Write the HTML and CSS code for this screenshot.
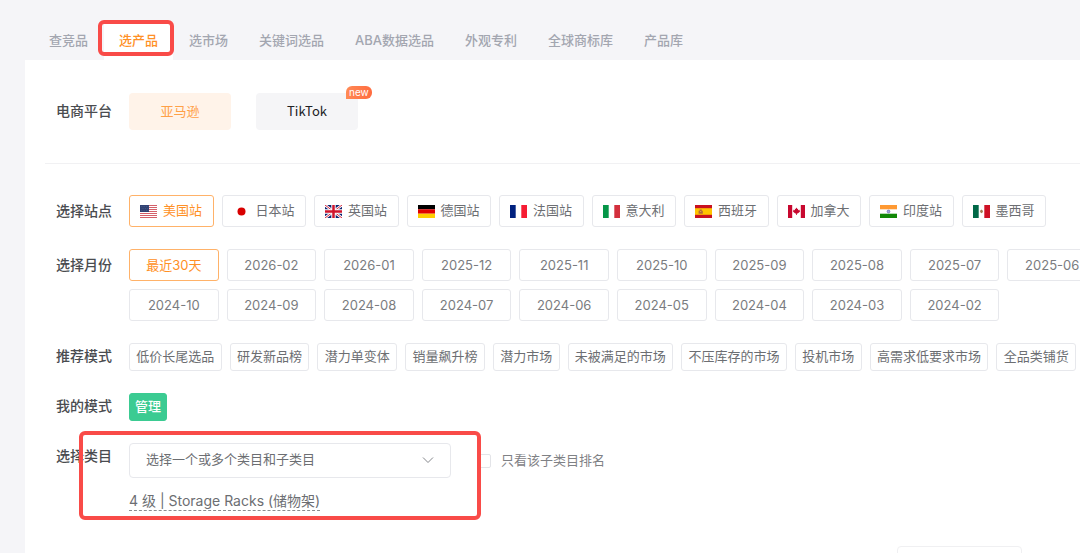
FILE: index.html
```
<!DOCTYPE html>
<html lang="zh-CN">
<head>
<meta charset="utf-8">
<title>选产品</title>
<link rel="stylesheet" href="styles.css">
</head>
<body>
<nav class="tabs">
  <a class="tab" href="#">查竞品</a>
  <a class="tab tab-active" href="#" aria-current="page">选产品<span class="marker marker-tab"></span></a>
  <a class="tab" href="#">选市场</a>
  <a class="tab" href="#">关键词选品</a>
  <a class="tab" href="#">ABA数据选品</a>
  <a class="tab" href="#">外观专利</a>
  <a class="tab" href="#">全球商标库</a>
  <a class="tab" href="#">产品库</a>
</nav>
<main class="panel">
  <section class="row platform-row">
    <h2 class="label label-platform" id="l-platform">电商平台</h2>
    <div class="platforms" role="group" aria-labelledby="l-platform">
      <button class="platform platform-active" type="button">亚马逊</button>
      <button class="platform" type="button">TikTok<span class="badge">new</span></button>
    </div>
  </section>
  <form class="filters">
    <section class="row">
      <h2 class="label" id="l-site">选择站点</h2>
      <div class="sites" role="group" aria-labelledby="l-site">
        <button class="option site option-active" type="button">
          <svg class="flag" viewBox="0 0 17 13"><path fill="#fff" d="M0 0h17v13H0z"/><path stroke="#d4606a" d="M0 .5h17M0 2.5h17M0 4.5h17M0 6.5h17M0 8.5h17M0 10.5h17M0 12.5h17"/><path fill="#2f4172" d="M0 0h9v7H0z"/><path stroke="#65739b" stroke-width=".5" stroke-dasharray=".7 1" d="M1 1.500h7.500M1.800 3.500h6.500M1 5.500h7.500"/></svg><span>美国站</span></button>
        <button class="option site" type="button">
          <svg class="flag" viewBox="0 0 17 13"><path fill="#fff" d="M0 0h17v13H0z"/><circle cx="8.500" cy="6.500" r="4" fill="#d80000"/></svg><span>日本站</span></button>
        <button class="option site" type="button">
          <svg class="flag" viewBox="0 0 17 13"><path fill="#0b2472" d="M0 0h17v13H0z"/><path stroke="#fff" stroke-width="2.600" d="M0 0l17 13M17 0L0 13"/><path stroke="#d0142c" stroke-width=".9" d="M0 0l17 13M17 0L0 13"/><path stroke="#fff" stroke-width="4.400" d="M8.500 0v13M0 6.500h17"/><path stroke="#d0142c" stroke-width="2.500" d="M8.500 0v13M0 6.500h17"/></svg><span>英国站</span></button>
        <button class="option site" type="button">
          <svg class="flag" viewBox="0 0 17 13"><path d="M0 0h17v4.300H0z"/><path fill="#e00000" d="M0 4.300h17v4.400H0z"/><path fill="#ffce00" d="M0 8.700h17V13H0z"/></svg><span>德国站</span></button>
        <button class="option site" type="button">
          <svg class="flag" viewBox="0 0 17 13"><path fill="#fff" d="M0 0h17v13H0z"/><path fill="#00217f" d="M0 0h5.700v13H0z"/><path fill="#f61c33" d="M11.300 0H17v13h-5.700z"/></svg><span>法国站</span></button>
        <button class="option site" type="button">
          <svg class="flag" viewBox="0 0 17 13"><path fill="#fff" d="M0 0h17v13H0z"/><path fill="#059648" d="M0 0h5.700v13H0z"/><path fill="#d32f3d" d="M11.300 0H17v13h-5.700z"/></svg><span>意大利</span></button>
        <button class="option site" type="button">
          <svg class="flag" viewBox="0 0 17 13"><path fill="#c91120" d="M0 0h17v13H0z"/><path fill="#ffc400" d="M0 3.200h17v6.600H0z"/><path fill="#b5683a" d="M4.600 4.500h2.200v1.200h1v3H3.600v-3h1z"/><path fill="#e6b44d" d="M5.200 6h1v1h-1z"/></svg><span>西班牙</span></button>
        <button class="option site" type="button">
          <svg class="flag" viewBox="0 0 17 13"><path fill="#fff" d="M0 0h17v13H0z"/><path fill="#c8082f" d="M0 0h4.200v13H0zM12.800 0H17v13h-4.200zM8.500 2.600l.9 1.400.8-.3-.2 1.500 1.900-.4-.4 1.300.7.500-2.500 2H8.900V10h-.8V8.600H7.300L4.800 6.600l.7-.5-.4-1.300 1.900.4-.2-1.500.8.3z"/></svg><span>加拿大</span></button>
        <button class="option site" type="button">
          <svg class="flag" viewBox="0 0 17 13"><path fill="#fff" d="M0 0h17v13H0z"/><path fill="#ff9932" d="M0 0h17v4.300H0z"/><path fill="#128807" d="M0 8.700h17V13H0z"/><circle cx="8.500" cy="6.500" r="1.400" fill="#a9a9dc" stroke="#5656ad" stroke-width=".6"/></svg><span>印度站</span></button>
        <button class="option site" type="button">
          <svg class="flag" viewBox="0 0 17 13"><path fill="#fff" d="M0 0h17v13H0z"/><path fill="#006847" d="M0 0h5.700v13H0z"/><path fill="#ce1126" d="M11.300 0H17v13h-5.700z"/><path fill="#a17b4e" d="M8.500 4.500l1.600 1.600-.6 1.500-1 .6-1-.6-.6-1.500z"/></svg><span>墨西哥</span></button>
      </div>
    </section>
    <section class="row">
      <h2 class="label" id="l-month">选择月份</h2>
      <div class="months" role="group" aria-labelledby="l-month">
        <button class="option option-active" type="button">最近30天</button>
        <button class="option" type="button">2026-02</button>
        <button class="option" type="button">2026-01</button>
        <button class="option" type="button">2025-12</button>
        <button class="option" type="button">2025-11</button>
        <button class="option" type="button">2025-10</button>
        <button class="option" type="button">2025-09</button>
        <button class="option" type="button">2025-08</button>
        <button class="option" type="button">2025-07</button>
        <button class="option" type="button">2025-06</button>
        <button class="option" type="button">2024-10</button>
        <button class="option" type="button">2024-09</button>
        <button class="option" type="button">2024-08</button>
        <button class="option" type="button">2024-07</button>
        <button class="option" type="button">2024-06</button>
        <button class="option" type="button">2024-05</button>
        <button class="option" type="button">2024-04</button>
        <button class="option" type="button">2024-03</button>
        <button class="option" type="button">2024-02</button>
      </div>
    </section>
    <section class="row">
      <h2 class="label label-short" id="l-mode">推荐模式</h2>
      <div class="modes" role="group" aria-labelledby="l-mode">
        <button class="chip" type="button">低价长尾选品</button>
        <button class="chip" type="button">研发新品榜</button>
        <button class="chip" type="button">潜力单变体</button>
        <button class="chip" type="button">销量飙升榜</button>
        <button class="chip" type="button">潜力市场</button>
        <button class="chip" type="button">未被满足的市场</button>
        <button class="chip" type="button">不压库存的市场</button>
        <button class="chip" type="button">投机市场</button>
        <button class="chip" type="button">高需求低要求市场</button>
        <button class="chip" type="button">全品类铺货</button>
      </div>
    </section>
    <section class="row">
      <h2 class="label label-short">我的模式</h2>
      <div><button class="chip chip-manage" type="button">管理</button></div>
    </section>
    <section class="row category-row">
      <label class="label label-short" for="category">选择类目</label>
      <div class="category">
        <div class="category-line">
          <div class="select-box">
            <select class="select" id="category"><option>选择一个或多个类目和子类目</option></select>
            <svg class="chevron" viewBox="0 0 12 8"><path d="M1 1.500l5 5 5-5" fill="none" stroke="#85878c"/></svg>
          </div>
          <label class="check"><input class="check-box" type="checkbox"><span class="check-text">只看该子类目排名</span></label>
        </div>
        <a class="picked" href="#">4 级 | Storage Racks (储物架)</a>
      </div>
      <span class="marker marker-category"></span>
    </section>
  </form>
  <div class="footer"><button class="footer-button" type="button" aria-label="更多"></button></div>
</main>
</body>
</html>
```
FILE: styles.css
```
* {
  box-sizing: border-box;
}

body {
  display: flex;
  flex-direction: column;
  height: 100vh;
  margin: 0;
  overflow: hidden;
  background: #f5f5f8;
  color: #6c6e72;
  font-family: Inter, "Noto Sans CJK SC", sans-serif;
  font-size: 13px;
}

button,
input,
select {
  font: inherit;
  color: inherit;
}

button {
  padding: 0;
  white-space: nowrap;
}

.tabs {
  display: flex;
  flex: none;
  gap: 1px;
  padding: 22px 0 0 34px;
}

.tab {
  position: relative;
  padding: 0 15px 2px;
  color: #a3a6b0;
  font-weight: 500;
  line-height: 36px;
  text-decoration: none;
  white-space: nowrap;
}

.tab-active {
  background: #fff;
  color: #ff9025;
}

.marker {
  position: absolute;
  border: 4px solid #f94b48;
  border-radius: 6px;
  pointer-events: none;
}

.marker-tab {
  inset: -2px -1px 4px -6px;
}

.panel {
  flex: 1 0 auto;
  margin-left: 25px;
  padding-top: 33px;
  background: #fff;
}

.row {
  display: grid;
  grid-template-columns: 73px minmax(0, 1fr);
  align-items: start;
}

.label {
  margin: 0;
  color: #4a4c50;
  font-size: 14px;
  font-weight: 500;
  line-height: 32px;
}

.label-short {
  line-height: 26px;
}

.label-platform {
  line-height: 36px;
}

.platform-row {
  margin-left: 20px;
  padding: 0 0 33px 11px;
  border-bottom: 1px solid #f1f1f3;
}

.platforms {
  display: flex;
  gap: 25px;
}

.platform {
  position: relative;
  width: 102px;
  height: 37px;
  padding-bottom: 2px;
  border: 0;
  border-radius: 4px;
  background: #f5f5f7;
  color: #202124;
  font-family: "Noto Sans CJK SC", sans-serif;
}

.platform-active {
  background: #fff3e9;
  color: #ffa047;
}

.badge {
  position: absolute;
  top: -7px;
  left: 90px;
  padding: 0 3px;
  border-radius: 6px 6px 6px 0;
  background: linear-gradient(90deg, #ff8a55, #ff6c40);
  color: #fff;
  font-family: Inter, sans-serif;
  font-size: 10px;
  line-height: 13px;
}

.filters {
  display: flex;
  flex-direction: column;
  gap: 22px;
  padding: 31px 0 0 31px;
}

.sites,
.months {
  display: grid;
  grid-template-columns: repeat(10, minmax(0, 1fr));
  gap: 8px;
}

.sites {
  margin-right: 34px;
}

.months {
  margin-right: -17px;
  color: #7a7c80;
}

.option,
.chip {
  border: 1px solid #e7e8ec;
  border-radius: 3px;
  background: #fff;
}

.option {
  height: 32px;
}

.option-active {
  padding-bottom: 2px;
  border-color: #ffb269;
  color: #ff9025;
}

.site {
  display: flex;
  align-items: center;
  gap: 6px;
  padding: 0 0 0 10px;
}

.site span,
.check-text {
  padding-bottom: 3px;
}

.flag {
  flex: none;
  width: 17px;
  height: 13px;
}

.modes {
  display: flex;
  gap: 8px;
  margin-right: 4px;
}

.chip {
  flex: 1 0 auto;
  height: 28px;
  padding: 0 5px 3px;
}

.chip-manage {
  border-color: #3bcb92;
  background: #3bcb92;
  color: #fff;
  font-weight: 500;
}

.category-row {
  position: relative;
}

.marker-category {
  inset: -12px auto -9px 23px;
  width: 402px;
}

.category {
  display: flex;
  flex-direction: column;
  align-items: flex-start;
  gap: 13px;
}

.category-line {
  display: flex;
  align-items: center;
  gap: 26px;
}

.select-box {
  position: relative;
  width: 322px;
}

.select {
  display: block;
  width: 100%;
  height: 35px;
  padding: 0 40px 3px 16px;
  border: 1px solid #e7e8ec;
  border-radius: 4px;
  background: #fff;
  appearance: none;
}

.chevron {
  position: absolute;
  top: 13px;
  right: 17px;
  width: 12px;
  height: 8px;
  pointer-events: none;
}

.check {
  display: flex;
  align-items: center;
  gap: 10px;
  color: #7f8185;
}

.check-box {
  width: 14px;
  height: 14px;
  margin: 0;
  border: 1px solid #e3e4e8;
  border-radius: 2px;
  background: #fff;
  appearance: none;
}

.picked {
  border-bottom: 1px dashed #8a8c90;
  color: inherit;
  font-size: 14px;
  line-height: 19px;
  text-decoration: none;
}

.footer {
  display: flex;
  justify-content: flex-end;
  padding: 35px 58px 0 0;
}

.footer-button {
  width: 125px;
  height: 32px;
  border: 1px solid #f0f0f2;
  border-radius: 4px;
  background: #fff;
}
```
